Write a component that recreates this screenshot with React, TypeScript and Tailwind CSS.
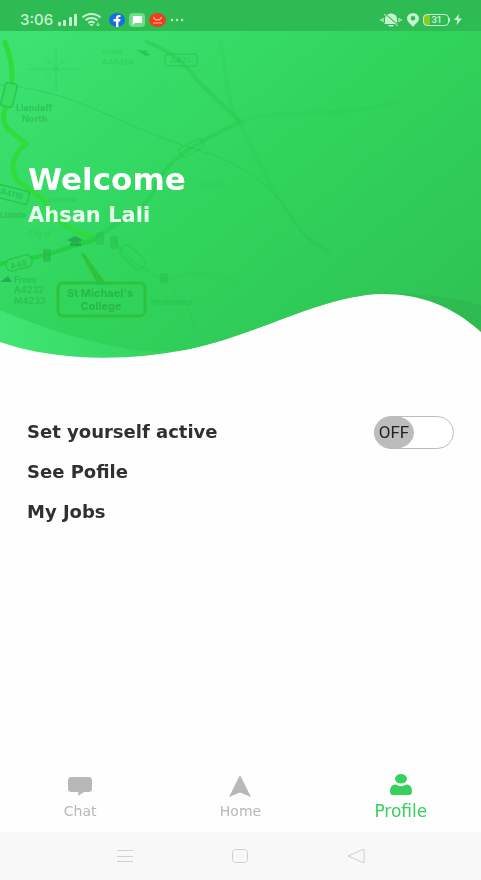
import { useState } from "react";

function StatusBar() {
  return (
    <div className="flex h-[31px] items-center justify-between bg-[#2fbb54] pt-2 pr-[19px] pl-5 text-[#c4f3cf]">
      <div className="flex items-center gap-1">
        <span className="w-[34px] text-[15px] leading-5 font-medium">3:06</span>
        <svg width="20" height="12" viewBox="0 0 20 12" fill="currentColor" aria-hidden="true">
          <rect x="0" y="8" width="3" height="4" rx="1" />
          <rect x="5" y="6" width="3" height="6" rx="1" />
          <rect x="11" y="3" width="3" height="9" rx="1" />
          <rect x="16" y="0" width="3" height="12" rx="1" />
        </svg>
        <svg width="19" height="14" viewBox="0 0 19 14" fill="none" stroke="currentColor" strokeWidth="2" aria-hidden="true">
          <path d="M.6 4.400C5.600-.1 13.400-.1 18.400 4.400" />
          <path d="M3.500 7.200c3.500-3 8.500-3 12 0" />
          <path d="M6.300 10c2-1.700 4.400-1.700 6.400 0" />
          <path d="m8 11.500 1.500 1.500 1.500-1.500z" fill="currentColor" strokeWidth="1" />
          <path d="m16 9.500v3m-1.500-1 1.500 1.500 1.500-1.500" strokeWidth="1" />
        </svg>
        <svg className="ml-1" width="16" height="14" viewBox="0 0 16 14" aria-hidden="true">
          <ellipse cx="8" cy="7" rx="8" ry="7" fill="#176fe0" />
          <path d="M7 14V8.500H4.500V6H7V4.700C7 2.800 8.200 2 10 2h1.500v2h-1c-.8 0-1.100.4-1.100 1V6h2.100l-.4 2.500H9.400V14z" fill="#fff" />
        </svg>
        <svg width="16" height="14" viewBox="0 0 16 14" aria-hidden="true">
          <rect width="16" height="14" rx="4" fill="#6fdc8a" />
          <path d="M4 3h9v7H6l-2.500 2z" fill="#fff" />
        </svg>
        <svg width="17" height="14" viewBox="0 0 17 14" fill="none" aria-hidden="true">
          <ellipse cx="8.500" cy="7" rx="8.500" ry="7" fill="#ef3d1d" />
          <path d="M4.500 4c1 4 7 4 8 0" stroke="#ffb09c" strokeWidth="1.200" />
          <path d="M4 10h9" stroke="#ffb09c" strokeWidth="1" />
        </svg>
        <svg width="14" height="4" viewBox="0 0 14 4" fill="currentColor" aria-hidden="true">
          <circle cx="2" cy="2" r="1.200" />
          <circle cx="7" cy="2" r="1.200" />
          <circle cx="12" cy="2" r="1.200" />
        </svg>
      </div>
      <div className="flex items-center gap-1">
        <svg width="22" height="14" viewBox="0 0 22 14" aria-hidden="true">
          <path d="M5 10V6c0-3 2-5 5-5.500h2c3 .5 5 2.500 5 5.500v4l1 1H4zM8 12h6l-1 1.500H9z" fill="currentColor" />
          <path d="M1 6v2M3 5v4M19 5v4M21 6v2" stroke="currentColor" strokeWidth="1.300" />
          <path d="m5 1 14 12" stroke="#2fbb54" strokeWidth="1.500" />
          <path d="m4 1 14 12" stroke="currentColor" strokeWidth="1" />
        </svg>
        <svg className="ml-px" width="12" height="14" viewBox="0 0 12 14" fill="currentColor" fillRule="evenodd" aria-hidden="true">
          <path d="M6 0a6 5.500 0 0 0-6 5.500C0 9 4 11 6 14c2-3 6-5 6-8.500A6 5.500 0 0 0 6 0m0 3a2.300 2.300 0 1 1 0 4.600A2.300 2.300 0 0 1 6 3" />
        </svg>
        <div className="flex items-center">
          <div className="flex h-3 w-[26px] items-center justify-center rounded border border-[#c4f3cf] bg-linear-to-r from-[#8bc926] from-25% to-transparent to-25% text-[9px] leading-none font-semibold">
            31
          </div>
          <span className="h-1 w-px bg-[#c4f3cf]" />
        </div>
        <svg width="8" height="11" viewBox="0 0 8 11" fill="currentColor" aria-hidden="true">
          <path d="M5 0 0 6h3.300L2.500 11 8 4.500H4.500z" />
        </svg>
      </div>
    </div>
  );
}

function MapArt() {
  return (
    <svg
      className="col-start-1 row-start-1 h-full w-full"
      viewBox="0 0 481 329"
      preserveAspectRatio="none"
      aria-hidden="true"
    >
      <defs>
        <linearGradient id="green" x1="0" y1="0.100" x2="1" y2="0.900">
          <stop offset="0" stopColor="#3ce272" />
          <stop offset="0.500" stopColor="#30d45b" />
          <stop offset="1" stopColor="#2fc253" />
        </linearGradient>
        <linearGradient id="foot" x1="0" y1="0" x2="1" y2="0">
          <stop offset="0" stopColor="#3fe673" />
          <stop offset="0.450" stopColor="#31ce58" />
          <stop offset="1" stopColor="#2dba50" />
        </linearGradient>
        <clipPath id="wave">
          <path d="M0 0H481V301C452 275 421 263 382 263C322 264 260 303 190 318C125 331 55 330 0 311Z" />
        </clipPath>
      </defs>
      <g clipPath="url(#wave)">
        <rect width="481" height="329" fill="url(#foot)" />
        <path d="M0 0H481V274C455 267 425 262 382 262C330 262 250 326 140 320C80 310 40 296 0 279Z" fill="url(#green)" />

        <g fill="none">
          <path d="M4 9C10 24 13 35 12 54C9 76-2 83 7 97L26 113C14 122 8 138 18 150L43 169C53 186 64 198 93 206" stroke="#2fdc3c" strokeWidth="5" />
          <path d="M145 10C175 22 184 32 198 50L240 91C190 115 165 130 155 158C145 180 115 192 97 206L46 224L0 233" stroke="#29c94e" strokeWidth="4" opacity="0.500" />
          <path d="M0 233L46 224L97 208" stroke="#27cf45" strokeWidth="4" />
          <path d="M115 210C130 235 150 240 164 249C190 240 220 238 240 258" stroke="#29d04c" strokeWidth="3" opacity="0.500" />
          <path d="M240 91C270 75 340 90 400 70M240 91C260 130 280 190 330 225M220 8C227 40 225 70 240 91" stroke="#2ac851" strokeWidth="4" opacity="0.200" />
          <path d="M0 54C65 59 100 82 155 104S220 120 260 150S285 200 330 220" stroke="#27b94f" strokeWidth="1" opacity="0.400" />
          <path d="M28 38H80M56 16V61M45 28L67 48M67 28L45 48M164 249C185 270 192 278 195 300" stroke="#27bd50" strokeWidth="1" opacity="0.300" />
          <g stroke="#29c84b" strokeWidth="1.500">
            <rect x="3" y="52" width="12" height="24" rx="3" fill="#3add62" transform="rotate(14 9 64)" />
            <rect x="165" y="23" width="32" height="12" rx="3" opacity="0.600" />
            <rect x="6" y="226" width="26" height="12" rx="5" fill="#35d95e" transform="rotate(-15 19 232)" />
            <rect x="-3" y="157" width="32" height="13" rx="3" transform="rotate(14 13 163)" />
            <rect x="179" y="112" width="25" height="10" rx="3" transform="rotate(-28 191 117)" opacity="0.500" />
            <rect x="119" y="220" width="28" height="13" rx="5" transform="rotate(42 133 226)" opacity="0.600" />
          </g>
          <path d="M81 223L98 254H107L84 222Z" fill="#2fc23c" />
          <rect x="58" y="252" width="87" height="33" rx="5" stroke="#2fc23c" strokeWidth="3" />
        </g>
        <g fill="#29b94a" opacity="0.700">
          <rect x="43" y="218" width="8" height="13" rx="2" />
          <rect x="96" y="201" width="8" height="13" rx="2" opacity="0.600" />
          <rect x="110" y="205" width="8" height="13" rx="2" opacity="0.600" />
          <rect x="160" y="242" width="8" height="10" rx="2" opacity="0.500" />
          <path d="M136 18l5 2 6-1-1 2 4 3-4 1-5-3z" />
          <path d="M67 209l8-4 8 4-8 4zM70 212v3h11v-3M0 251l8-6 4 6z" fill="#229c4c" />
        </g>
        <g className="font-bold" fill="#27b84d" opacity="0.650" fontSize="9">
          <text x="16" y="80">Llandaff</text>
          <text x="22" y="91">North</text>
          <text x="102" y="24" fontSize="8" opacity="0.400">From</text>
          <text x="102" y="34" fontSize="8" opacity="0.400">A48 M4</text>
          <text x="0" y="187" fontSize="8">Llanda</text>
          <text x="48" y="171" fontSize="6" opacity="0.500">Cathedral</text>
          <text x="28" y="205" fontSize="7" opacity="0.500">City of</text>
          <text x="14" y="252">From</text>
          <text x="14" y="262">A4232</text>
          <text x="14" y="273">M4233</text>
          <text x="151" y="274" fontSize="8" opacity="0.700">Pontcanna</text>
          <text x="198" y="156" fontSize="7" opacity="0.300">Gabalfa</text>
          <text x="170" y="32" fontSize="8" opacity="0.500">A470</text>
          <text x="10" y="236" fontSize="8" transform="rotate(-15 19 232)">A48</text>
          <text x="0" y="166" fontSize="8" transform="rotate(14 13 163)">A4119</text>
        </g>
        <g className="font-bold" fill="#2ab842" fontSize="11" textAnchor="middle">
          <text x="100" y="266">St Michael's</text>
          <text x="101" y="279">College</text>
        </g>
      </g>
    </svg>
  );
}

function ActiveSwitch() {
  const [active, setActive] = useState(false);
  return (
    <div className="grid h-[33px] w-20">
      <input
        id="active"
        type="checkbox"
        role="switch"
        checked={active}
        onChange={(e) => setActive(e.target.checked)}
        className="col-start-1 row-start-1 h-full w-full cursor-pointer appearance-none rounded-full border border-[#bbbbbb] bg-white"
      />
      <span
        className={
          "pointer-events-none col-start-1 row-start-1 flex w-10 items-center justify-center rounded-[50%] font-['Roboto','Liberation_Sans',sans-serif] text-[17px] font-normal text-[#222222] " +
          (active ? "justify-self-end bg-[#36d65f]" : "justify-self-start bg-[#bcbcbc]")
        }
      >
        {active ? "ON" : "OFF"}
      </span>
    </div>
  );
}

function BottomNav() {
  return (
    <nav className="grid grid-cols-3 pb-[11px] font-['DejaVu_Sans',sans-serif] text-[#b8b8b8]">
      <a href="#chat" className="flex flex-col items-center">
        <svg width="26" height="24" viewBox="0 0 26 24" fill="currentColor" aria-hidden="true">
          <path d="M4.500 3h17A3.500 3.500 0 0 1 25 6.500v8a3.500 3.500 0 0 1-3.500 3.500H17l-6 4 .5-4h-7A3.500 3.500 0 0 1 1 14.500v-8A3.500 3.500 0 0 1 4.500 3" />
        </svg>
        <span className="mt-[3px] text-sm leading-5">Chat</span>
      </a>
      <a href="#home" className="flex flex-col items-center">
        <svg width="26" height="24" viewBox="0 0 26 24" fill="currentColor" aria-hidden="true">
          <path d="M13 1 24 23 13 18.500 2 23z" />
        </svg>
        <span className="mt-[3px] text-sm leading-5">Home</span>
      </a>
      <a href="#profile" aria-current="page" className="flex flex-col items-center text-[#36d15c]">
        <svg width="26" height="24" viewBox="0 0 26 24" fill="currentColor" aria-hidden="true">
          <ellipse cx="13" cy="4.800" rx="6" ry="4.800" />
          <path d="M7 10.500c2 0 3 1.700 6 1.700s4-1.700 6-1.700c3 0 5 3 5 7 0 2.500-1 3.500-3 3.500H5c-2 0-3-1-3-3.500 0-4 2-7 5-7" />
        </svg>
        <span className="mt-[3px] text-[17px] leading-5">Profile</span>
      </a>
    </nav>
  );
}

function SystemBar() {
  return (
    <div className="flex h-12 items-center justify-center gap-[98px] bg-[#f8f8f8] text-[#d0d0d0]">
      <button type="button" aria-label="Recent apps">
        <svg width="16" height="16" viewBox="0 0 16 16" fill="none" stroke="currentColor" aria-hidden="true">
          <path d="M0 2.500h16M0 8.500h16M0 13.500h16" />
        </svg>
      </button>
      <button type="button" aria-label="Home screen">
        <svg width="18" height="16" viewBox="0 0 18 16" fill="none" stroke="currentColor" aria-hidden="true">
          <rect x="1.500" y="1.500" width="15" height="13" rx="3" />
        </svg>
      </button>
      <button type="button" aria-label="Back">
        <svg width="18" height="16" viewBox="0 0 18 16" fill="none" stroke="currentColor" strokeLinejoin="round" aria-hidden="true">
          <path d="M1 8 17 1v14z" />
        </svg>
      </button>
    </div>
  );
}

export default function App() {
  return (
    <div className="flex min-h-screen flex-col bg-[#fefefe] font-['Inter','Open_Sans',sans-serif]">
      <StatusBar />
      <header className="grid h-[329px]">
        <MapArt />
        <div className="col-start-1 row-start-1 px-7 pt-[130px] font-['DejaVu_Sans',sans-serif] font-bold text-white">
          <h1 className="text-[31px] leading-9">Welcome</h1>
          <p className="mt-1 text-[21px] leading-7 text-[#e9fdee]">Ahsan Lali</p>
        </div>
      </header>
      <main className="flex flex-1 flex-col px-[27px] pt-[52px] font-['DejaVu_Sans',sans-serif] text-lg font-bold text-[#303030]">
        <div className="flex h-10 items-center justify-between">
          <label htmlFor="active">Set yourself active</label>
          <ActiveSwitch />
        </div>
        <a href="#see-profile" className="flex h-10 items-center">See Pofile</a>
        <a href="#jobs" className="flex h-10 items-center">My Jobs</a>
      </main>
      <BottomNav />
      <SystemBar />
    </div>
  );
}
